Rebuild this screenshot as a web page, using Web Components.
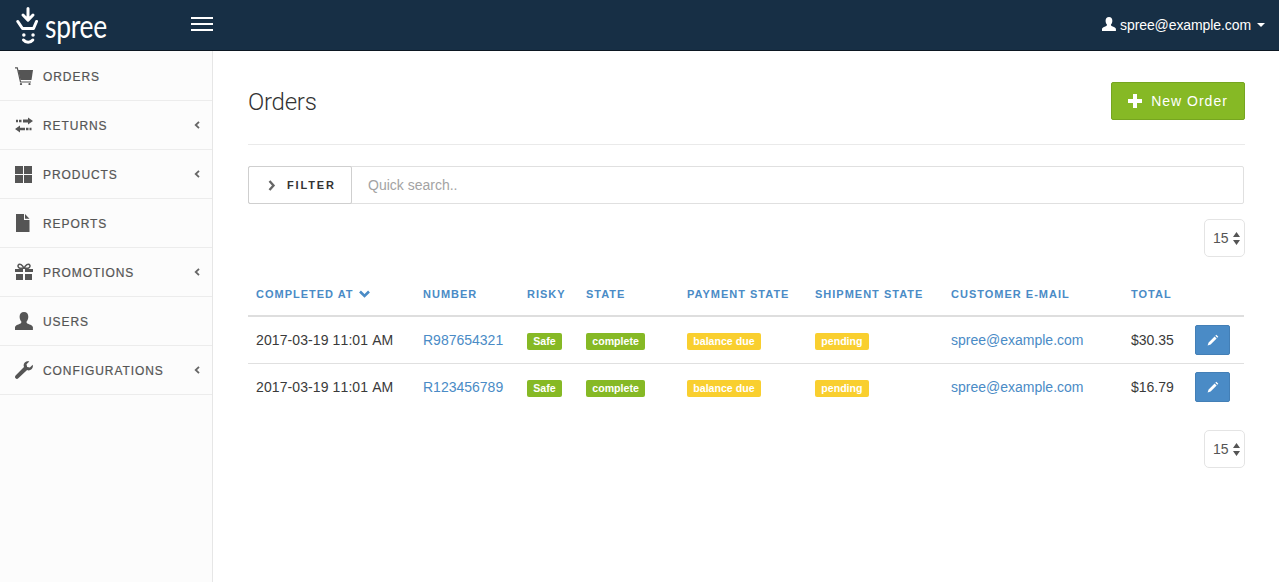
<!DOCTYPE html>
<html lang="en"><head><meta charset="utf-8"><title>Orders</title>
<style>
html,body{margin:0;padding:0;height:100%;background:#fff;font-family:"Liberation Sans",Arial,sans-serif;font-size:14px;color:#333;overflow:hidden}
app-shell{height:582px}
</style></head><body>
<app-shell>
  <app-header slot="header"></app-header>
  <side-nav slot="nav">
    <nav-item icon="cart" label="Orders"></nav-item>
    <nav-item icon="swap" label="Returns" arrow></nav-item>
    <nav-item icon="grid" label="Products" arrow></nav-item>
    <nav-item icon="file" label="Reports"></nav-item>
    <nav-item icon="gift" label="Promotions" arrow></nav-item>
    <nav-item icon="user" label="Users"></nav-item>
    <nav-item icon="wrench" label="Configurations" arrow></nav-item>
  </side-nav>
  <page-head title-text="Orders" action="New Order"></page-head>
  <filter-bar></filter-bar>
  <per-page value="15"></per-page>
  <orders-table></orders-table>
  <per-page value="15" class="lower"></per-page>
</app-shell>
<script>
const ICONS={
 cart:'<svg width="18" height="18" viewBox="0 0 18 18"><path fill="currentColor" d="M3 3h15l-1.500 10H5.500z"/><path fill="none" stroke="currentColor" stroke-width="1.200" d="M0 .8h2.300L5.500 15h10.500"/><circle cx="6" cy="17" r="1.100" fill="currentColor"/><circle cx="14.500" cy="17" r="1.100" fill="currentColor"/></svg>',
 swap:'<svg width="18" height="18" viewBox="0 0 18 18"><path fill="currentColor" d="M13 1.500l5 3.500-5 3.500V6.400H8V3.600h5zM1 3.800h2v2.400H1zM4 3.800h2.500v2.400H4zM5 9.500v2.200h5v2.600H5v2.200L0 13zM11 11.800h2.500v2.400H11zM14.500 11.800h2v2.400h-2z"/></svg>',
 grid:'<svg width="17" height="17" viewBox="0 0 17 17"><path fill="currentColor" d="M0 0h8v8H0zM9 0h8v8H9zM0 9h8v8H0zM9 9h8v8H9z"/></svg>',
 file:'<svg width="15" height="18" viewBox="0 0 15 18"><path fill="currentColor" d="M1 0h8v6h5.500v12H1zM10 0l4.500 4.800H10z"/></svg>',
 gift:'<svg width="18" height="18" viewBox="0 0 18 18"><path fill="currentColor" d="M0 6h8v3H0zM10 6h8v3h-8zM1 11h7v6H1zM10 11h7v6h-7z"/><path fill="none" stroke="currentColor" stroke-width="1.500" d="M9 5.200C7 1.500 5 .8 3.800 1.500 2.400 2.300 2.800 4.600 4.800 5.200zM9 5.200c2-3.700 4-4.400 5.200-3.700 1.400.8 1 3.100-1 3.700z"/></svg>',
 user:'<svg width="18" height="18" viewBox="0 0 18 18"><path fill="currentColor" d="M9 0c2.800 0 4.300 2 4.300 4.700 0 2-.8 3.900-1.800 5 0 1.200.4 1.700 1.500 2.100 2 .8 4.500 1.700 4.900 3.200V18H0v-3c.4-1.500 2.900-2.400 4.900-3.200 1.100-.4 1.500-.9 1.500-2.100-1-1.100-1.800-3-1.800-5C4.600 2 6.200 0 9 0z"/></svg>',
 wrench:'<svg width="18" height="18" viewBox="0 0 18 18"><path fill="currentColor" d="M17.700 3.800c.5 1.700 0 3.400-1.200 4.500-1.200 1.100-2.900 1.400-4.400.8L3.300 17.300c-.8.800-2 .8-2.700 0-.8-.7-.8-1.900 0-2.700L9 6C8.300 4.500 8.600 2.800 9.800 1.600 11 .4 12.700 0 14.300.4L11.500 3.200l.7 2.700 2.700.7z"/></svg>'
};
function def(name,cls){customElements.define(name,cls)}
function shadow(el,html){el.attachShadow({mode:'open'}).innerHTML=html}

def('app-shell',class extends HTMLElement{constructor(){super();shadow(this,`<style>
:host{display:grid;grid-template-columns:213px 1fr;grid-template-rows:51px 1fr;width:1279px}
.h{grid-column:1/3}
main{padding:31px 34px 0 35px;min-width:0}
</style><div class="h"><slot name="header"></slot></div><div><slot name="nav"></slot></div><main><slot></slot></main>`)}});

def('app-header',class extends HTMLElement{constructor(){super();shadow(this,`<style>
:host{display:flex;align-items:center;height:50px;background:#172f45;border-bottom:1px solid #0c1722;color:#fff;box-sizing:content-box}
.logo{display:flex;align-items:center;margin-left:16px;width:175px}
.word{font:400 33px/50px Lato,"Liberation Sans",sans-serif;color:#fff;margin-left:7px;letter-spacing:-.3px;position:relative;top:-.5px;display:inline-block;transform:scaleX(.8);transform-origin:left;width:60px}
.burger{width:22px;height:14px;display:flex;flex-direction:column;justify-content:space-between;position:relative;top:-1px}
.burger i{display:block;height:2px;background:#fff}
.user{margin-left:auto;margin-right:14px;display:flex;align-items:center;font-size:14px;color:#fff;letter-spacing:-.09px}
.user svg.u{margin-right:4px;position:relative;top:-1px}
.caret{width:0;height:0;border:4px solid transparent;border-top-color:#fff;border-bottom:0;margin-left:6px}
</style>
<div class="logo">
<svg width="22" height="38" viewBox="0 0 22 38" style="margin-top:1px"><g fill="none" stroke="#fff" stroke-linecap="round" stroke-linejoin="round">
<path stroke-width="3" d="M12 1.500v10M7 8l5 5.200L17 8"/>
<path stroke-width="3" d="M1.800 14.500l4.700 7h11l3-7"/>
<path stroke-width="3.400" d="M7.800 28h.1M17 28h.1"/>
<path stroke-width="3" d="M7.500 33c2.500 3 6.800 3 9.300 0"/></g></svg>
<span class="word">spree</span></div>
<div class="burger"><i></i><i></i><i></i></div>
<div class="user"><svg class="u" width="14" height="14" viewBox="0 0 18 18"><path fill="#fff" d="M9 0c2.800 0 4.300 2 4.300 4.700 0 2-.8 3.900-1.800 5 0 1.200.4 1.700 1.500 2.100 2 .8 4.500 1.700 4.900 3.200V18H0v-3c.4-1.500 2.900-2.400 4.900-3.200 1.100-.4 1.500-.9 1.500-2.100-1-1.100-1.800-3-1.800-5C4.600 2 6.200 0 9 0z"/></svg>spree@example.com<span class="caret"></span></div>`)}});

def('side-nav',class extends HTMLElement{constructor(){super();shadow(this,`<style>
:host{display:block;height:531px;background:#fcfcfc;border-right:1px solid #e6e6e6;box-sizing:border-box}
</style><slot></slot>`)}});

def('nav-item',class extends HTMLElement{connectedCallback(){if(this.shadowRoot)return;
shadow(this,`<style>
:host{display:flex;align-items:center;height:48px;padding-left:15px;padding-right:12px;border-bottom:1px solid #ececec;color:#555}
:host(:first-child){height:48px;padding-top:1px}
.i{width:28px;height:18px;display:flex;align-items:center;flex:none}
.l{font-size:12px;letter-spacing:.93px;-webkit-text-stroke:.2px #555;text-transform:uppercase;flex:1;position:relative;top:.5px}
.a{flex:none}
</style><span class="i">${ICONS[this.getAttribute('icon')]}</span><span class="l">${this.getAttribute('label')}</span>${this.hasAttribute('arrow')?'<svg class="a" width="6" height="8" viewBox="0 0 6 8"><path fill="none" stroke="#666" stroke-width="1.800" d="M5 .8L1.700 4 5 7.200"/></svg>':''}`)}});

def('page-head',class extends HTMLElement{connectedCallback(){if(this.shadowRoot)return;
shadow(this,`<style>
:host{display:flex;align-items:flex-start;justify-content:space-between;height:62px;border-bottom:1px solid #eaeaea}
h1{margin:0;font:300 24px/40px Roboto,"Liberation Sans",sans-serif;color:#333;letter-spacing:-.25px}
button{height:38px;width:134px;box-sizing:border-box;border:1px solid #76a520;border-radius:2px;background:#86b925;color:#fff;font:14px "Liberation Sans",sans-serif;letter-spacing:1px;display:flex;align-items:center;justify-content:center;gap:9px;padding:0}
</style><h1>${this.getAttribute('title-text')}</h1><button><svg width="14" height="14" viewBox="0 0 14 14"><path fill="#fff" d="M5 0h4v5h5v4H9v5H5V9H0V5h5z"/></svg>${this.getAttribute('action')}</button>`)}});

def('filter-bar',class extends HTMLElement{constructor(){super();shadow(this,`<style>
:host{display:flex;height:38px;margin-top:21px;margin-right:1px;box-sizing:border-box;border:1px solid #e0e0e0;border-radius:2px}
.b{width:102px;flex:none;margin:-1px 0 -1px -1px;box-sizing:content-box;border:1px solid #cfcfcf;border-radius:2px;display:flex;align-items:center;font:bold 11px "Liberation Sans",sans-serif;letter-spacing:1.85px;color:#333}
.b svg{margin:0 11px 0 19px}
.q{flex:1;padding-left:16px;line-height:36px;font-size:14px;color:#a3a3a3}
</style><div class="b"><svg width="8" height="11" viewBox="0 0 8 11"><path fill="none" stroke="#666" stroke-width="2.400" d="M1.500 1l4 4.500-4 4.500"/></svg>FILTER</div><div class="q">Quick search..</div>`)}});

def('per-page',class extends HTMLElement{connectedCallback(){if(this.shadowRoot)return;
shadow(this,`<style>
:host{display:flex;justify-content:flex-end;margin-top:15px}
:host(.lower){margin-top:20px}
.s{width:41px;height:38px;box-sizing:border-box;border:1px solid #e4e4e4;border-radius:5px;display:flex;align-items:center;padding-left:8px;font-size:14px;color:#555;gap:4px}
</style><div class="s">${this.getAttribute('value')}<svg width="7" height="13" viewBox="0 0 7 13"><path fill="#555" d="M3.500 0L7 5H0zM0 8h7l-3.500 5z"/></svg></div>`)}});

def('state-badge',class extends HTMLElement{constructor(){super();shadow(this,`<style>
:host{display:inline-block;height:17px;padding:0 6.300px;border-radius:2px;font:bold 10.600px/17px "Liberation Sans",sans-serif;color:#fff;background:#86b925;vertical-align:middle;position:relative;top:1px}
:host(.warn){background:#f9cf2f}
</style><slot></slot>`)}});

const HEAD=['Completed at','Number','Risky','State','Payment State','Shipment State','Customer E-mail','Total',''];
const ROWS=[['R987654321','$30.35'],['R123456789','$16.79']];
def('orders-table',class extends HTMLElement{constructor(){super();
const pencil='<svg width="12" height="12" viewBox="0 0 12 12"><path fill="#fff" d="M9.300.8l2 2-1 1-2-2zM7.600 2.500l2 2-6 6L.6 11.500l1-3z"/></svg>';
shadow(this,`<style>
:host{display:block;margin-top:17px;margin-right:1px}
.r{display:grid;grid-template-columns:167px 104px 59px 101px 128px 136px 180px 64px 1fr;align-items:center}
.r>*{padding-left:8px;min-width:0;white-space:nowrap}
.th{padding-bottom:1px;box-sizing:border-box;height:43px;border-bottom:2px solid #dedede;color:#4a8bc6;font:bold 11px "Liberation Sans",sans-serif;letter-spacing:1px;text-transform:uppercase}
.th svg{margin-left:5px;vertical-align:0}
.td{height:47px;box-sizing:border-box;border-bottom:1px solid #e0e0e0;font-size:14px;color:#3a3a3a}
.td:last-child{border-bottom:0;height:46px}
.d{font-kerning:none;letter-spacing:.1px}
a{color:#4a8bc6;text-decoration:none}
.e{width:35px;height:30px;box-sizing:border-box;background:#4a8bc6;border:1px solid #437fb6;border-radius:2px;display:flex;align-items:center;justify-content:center}
</style>
<div class="r th">${HEAD.map((h,i)=>`<div>${h}${i==0?'<svg width="11" height="8" viewBox="0 0 11 8"><path fill="none" stroke="#4a8bc6" stroke-width="2.600" d="M1 1.500l4.500 4.500L10 1.500"/></svg>':''}</div>`).join('')}</div>
${ROWS.map(r=>`<div class="r td"><div class="d">2017-03-19 11:01 AM</div><div><a href="#">${r[0]}</a></div><div><state-badge>Safe</state-badge></div><div><state-badge>complete</state-badge></div><div><state-badge class="warn">balance due</state-badge></div><div><state-badge class="warn">pending</state-badge></div><div><a href="#">spree@example.com</a></div><div>${r[1]}</div><div><div class="e">${pencil}</div></div></div>`).join('')}`)}});
</script>
</body></html>
